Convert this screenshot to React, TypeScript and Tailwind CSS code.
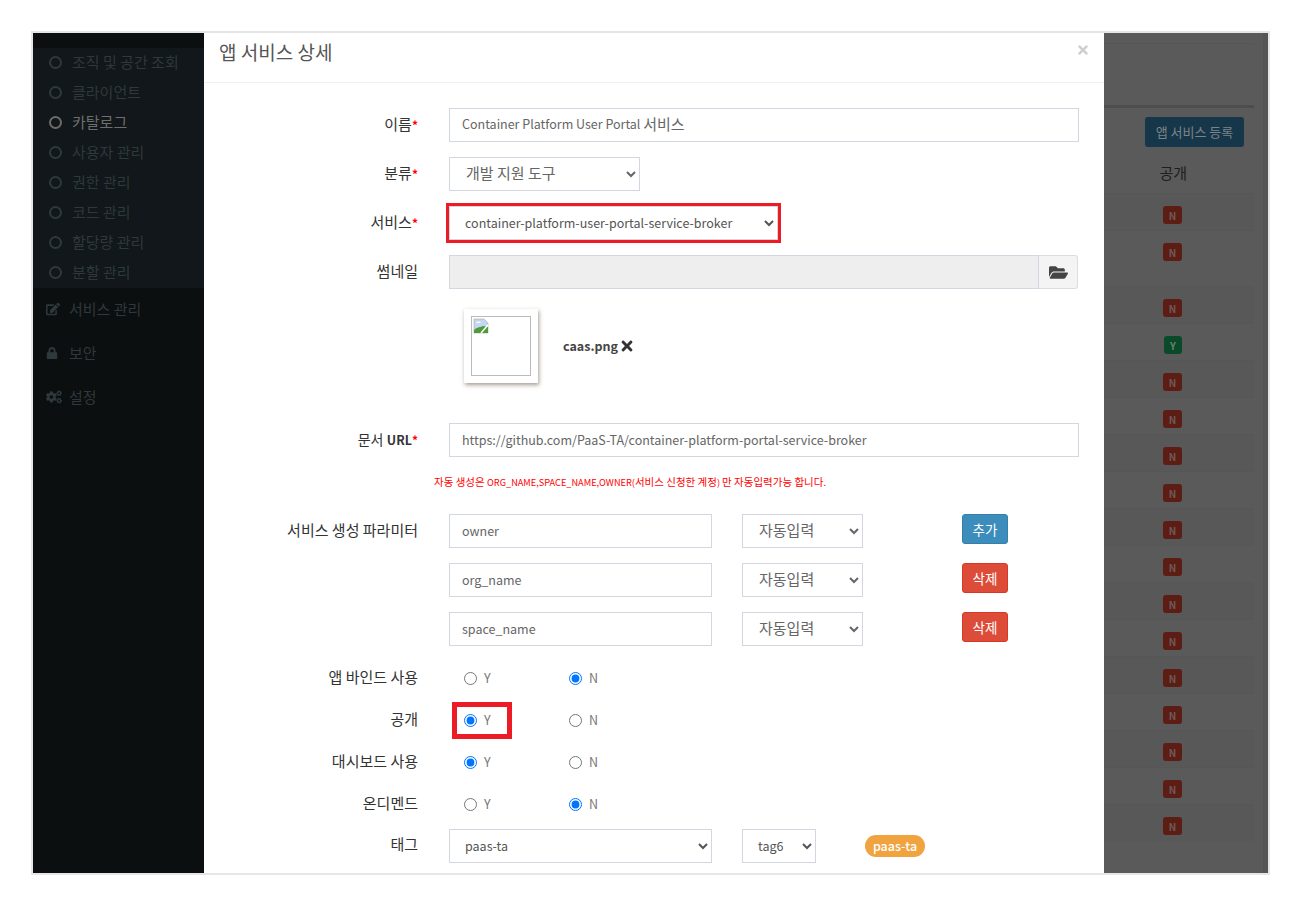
import React from "react";
import { FaFolderOpen, FaTimes, FaEdit, FaLock, FaCogs } from "react-icons/fa";

const font = "font-['Noto_Sans_CJK_KR','Noto_Sans',sans-serif]";
const inputCls =
  "h-[34px] border border-[#d2d6de] bg-white px-3 pb-[2px] text-[12.5px] text-[#666] outline-none";
const selectLatin =
  "h-[34px] border border-[#d2d6de] bg-white pb-[1px] pl-[11px] pr-1 text-[12.5px] text-[#555] outline-none";
const selectKo =
  "h-[34px] border border-[#d2d6de] bg-white pb-[3px] pl-[12px] pr-1 text-[15px] text-[#666] outline-none";

const subMenu = ["조직 및 공간 조회", "클라이언트", "카탈로그", "사용자 관리", "권한 관리", "코드 관리", "할당량 관리", "분할 관리"];
const badges = ["N", "N", "N", "Y", "N", "N", "N", "N", "N", "N", "N", "N", "N", "N", "N", "N", "N"];

function Label({ children, req }: { children: React.ReactNode; req?: boolean }) {
  return (
    <label className="block w-[214px] shrink-0 text-right text-[15px] leading-[20px] text-[#333]">
      {children}
      {req && <span className="text-[12px] font-bold text-[#f00]">*</span>}
    </label>
  );
}

function Row({ label, req, children, mb = "mb-[15px]" }: { label: React.ReactNode; req?: boolean; children: React.ReactNode; mb?: string }) {
  return (
    <div className={`flex items-start ${mb}`}>
      <div className="shrink-0 pt-[6px]"><Label req={req}>{label}</Label></div>
      <div className="ml-[31px] flex-1">{children}</div>
    </div>
  );
}

function Radio({ checked, name, label }: { checked?: boolean; name: string; label: string }) {
  return (
    <label className="flex items-center gap-[7px] text-[12.5px] leading-none text-[#777]">
      <input type="radio" name={name} defaultChecked={checked} className="m-0 h-[13px] w-[13px]" />
      {label}
    </label>
  );
}

function RadioRow({ label, name, yes, boxed }: { label: string; name: string; yes: boolean; boxed?: boolean }) {
  return (
    <div className="flex h-[42px] items-center">
      <div className="-mt-[3px] shrink-0"><Label>{label}</Label></div>
      <div className="ml-[46px] w-[105px] shrink-0">
        {boxed ? (
          <div className="relative">
            <Radio name={name} label="Y" checked={yes} />
            <div className="absolute -left-[12px] -top-[12px] h-[37px] w-[60px] border-[5px] border-[#ed1c24]" />
          </div>
        ) : (
          <Radio name={name} label="Y" checked={yes} />
        )}
      </div>
      <Radio name={name} label="N" checked={!yes} />
    </div>
  );
}

function ParamRow({ value, add }: { value: string; add?: boolean }) {
  return (
    <div className="flex items-start">
      <input readOnly value={value} className={`${inputCls} w-[263px]`} />
      <select className={`${selectKo} ml-[30px] w-[121px]`}><option>자동입력</option></select>
      <button className={`ml-[99px] h-[30px] w-[46px] rounded-[3px] border text-[13.5px] text-white ${add ? "border-[#367fa9] bg-[#3c8dbc]" : "border-[#d73925] bg-[#dd4b39]"}`}>
        {add ? "추가" : "삭제"}
      </button>
    </div>
  );
}

export default function App() {
  return (
    <div className={`h-[906px] overflow-hidden bg-white pt-[31px] pl-[31px] ${font}`}>
      <div className="relative flex h-[844px] w-[1239px] overflow-hidden border-2 border-[#e6e6e6] bg-[#5a5a5a]">
        {/* Sidebar */}
        <aside className="w-[171px] shrink-0 bg-[#0b0f10]">
          <div className="mt-[15px] bg-[#11171a]">
            {subMenu.map((m, i) => (
              <div key={m} className={`flex h-[30px] items-center pb-[1px] pl-[16px] text-[15px] ${i === 2 ? "text-[#6e6e6c]" : "text-[#2f383b]"}`}>
                <span className={`mr-[10px] h-[13px] w-[13px] rounded-full border-2 ${i === 2 ? "border-[#6f6c68]" : "border-[#2f393c]"}`} />
                {m}
              </div>
            ))}
          </div>
          {[
            { t: "서비스 관리", I: FaEdit, s: 14 },
            { t: "보안", I: FaLock, s: 12 },
            { t: "설정", I: FaCogs, s: 16 },
          ].map(({ t, I, s }) => (
            <div key={t} className="flex h-[44px] items-center pb-[2px] pl-[13px] text-[15px] text-[#2f383b]">
              <span className="flex w-[23px]"><I size={s} /></span>
              {t}
            </div>
          ))}
        </aside>

        {/* Background content */}
        <main className="flex flex-1 flex-col pr-[9px]">
          <div className="mt-[10px] border-t border-[#565656]" />
          <div className="mt-[61px] h-[3px] bg-[#4d4d4d]" />
          <div className="mt-[9px] flex justify-end pr-[10px]">
            <button className="h-[30px] w-[99px] rounded-[3px] bg-[#16364a] pb-[1px] text-[13px] text-[#7d8488]">앱 서비스 등록</button>
          </div>
          <div className="mt-[15px]">
            <div className="h-[31px] pr-[67px] text-right text-[15px] leading-[22px] text-[#1e1e1e]">공개</div>
            {badges.map((b, i) => (
              <div
                key={i}
                className="flex items-start justify-end border-t border-[#565656] pr-[72px] pt-[12px]"
                style={{ height: i === 1 ? 56 : 37, backgroundColor: i % 2 === 0 ? "#585858" : "#5a5a5a" }}
              >
                <span className={`flex h-[18px] items-center justify-center rounded-[3px] text-[10px] font-bold ${b === "Y" ? "w-[18px] bg-[#0a4a2a] text-[#6f7f76]" : "w-[19px] bg-[#5c1d14] text-[#6f5a58]"}`}>
                  {b}
                </span>
              </div>
            ))}
          </div>
        </main>
        <div className="w-[5px] shrink-0 bg-[#555]" />

        {/* Modal */}
        <div className="absolute bottom-0 left-[171px] top-0 w-[900px] bg-white">
          <div className="relative flex h-[50px] items-center border-b border-[#f0f0f0] pb-[10px] pl-[15px] text-[19px] text-[#555]">
            앱 서비스 상세
            <FaTimes className="absolute right-[14px] top-[10px] text-[#cfcfcf]" size={14} />
          </div>

          <div className="pt-[25px]">
            <Row label="이름" req>
              <div className={`${inputCls} flex w-[630px] items-center`}>
                Container Platform User Portal&nbsp;<span className="text-[15px]">서비스</span>
              </div>
            </Row>
            <Row label="분류" req>
              <select className={`${selectKo} w-[191px]`}><option>개발 지원 도구</option></select>
            </Row>
            <Row label="서비스" req>
              <div className="relative">
                <select className={`${selectLatin} w-[329px]`}><option>container-platform-user-portal-service-broker</option></select>
                <div className="absolute -left-[3px] -top-[3px] h-[40px] w-[335px] border-[3px] border-[#ed1c24]" />
              </div>
            </Row>
            <Row label="썸네일" mb="mb-[20px]">
              <div className="flex h-[34px] w-[629px]">
                <div className="flex-1 border border-[#d2d6de] bg-[#eee]" />
                <div className="flex w-[39px] items-center justify-center rounded-r-[3px] border border-l-0 border-[#ddd] bg-[#f4f4f4] text-[#444]">
                  <FaFolderOpen size={19} />
                </div>
              </div>
            </Row>
            <Row label="" mb="mb-[40px]">
              <div className="ml-[15px] flex items-center">
                <div className="h-[74px] w-[74px] bg-white p-[7px] shadow-[1px_2px_4px_rgba(80,60,40,0.5)]">
                  <div className="h-[60px] w-[60px] border border-[#bbb] p-px">
                    <svg width="16" height="16" viewBox="0 0 16 16">
                      <path d="M1 1h10l4 4v10H1z" fill="#c3d7f3" stroke="#a9a9a9" strokeWidth="0.6" />
                      <path d="M1 15l0-3c3-3 7-3 9-4l5 1v6z" fill="#4f9a3a" />
                      <path d="M8 15L15 7" stroke="#fff" strokeWidth="1.5" />
                      <path d="M3 5c1-2 4-2 5 0z" fill="#fff" />
                    </svg>
                  </div>
                </div>
                <span className="ml-[25px] text-[12.5px] font-bold text-[#444]">caas.png</span>
                <FaTimes className="ml-[1px] text-[#333]" size={16} />
              </div>
            </Row>
            <Row label={<><span className="text-[14px]">문서</span> <b className="text-[12.5px] font-bold">URL</b></>} req mb="mb-[17px]">
              <input readOnly value="https://github.com/PaaS-TA/container-platform-portal-service-broker" className={`${inputCls} w-[630px]`} />
            </Row>
            <p className="mb-[24px] ml-[230px] flex h-[16px] items-center whitespace-pre text-[10.5px] leading-[16px] text-[#f00]">
              자동 생성은 <span className="text-[9.2px]">ORG_NAME,SPACE_NAME,OWNER(</span>서비스 신청한 계정<span className="text-[9.2px]">) </span>만 자동입력가능 합니다<span className="text-[9.2px]">.</span>
            </p>
            <Row label="서비스 생성 파라미터" mb="mb-0">
              <div className="flex flex-col gap-[15px]">
                <ParamRow value="owner" add />
                <ParamRow value="org_name" />
                <ParamRow value="space_name" />
              </div>
            </Row>
            <div className="pt-[11px]">
              <RadioRow label="앱 바인드 사용" name="bind" yes={false} />
              <RadioRow label="공개" name="pub" yes boxed />
              <RadioRow label="대시보드 사용" name="dash" yes />
              <RadioRow label="온디멘드" name="ond" yes={false} />
            </div>
            <div className="mt-[4px] flex items-start">
              <div className="shrink-0 pt-[5px]"><Label>태그</Label></div>
              <div className="ml-[31px] flex items-center">
                <select className={`${selectLatin} w-[263px]`}><option>paas-ta</option></select>
                <select className={`${selectLatin} ml-[30px] w-[74px]`}><option>tag6</option></select>
                <span className="ml-[49px] flex h-[22px] w-[60px] items-center justify-center rounded-full bg-[#f0a33f] text-[12.5px] font-medium text-white">paas-ta</span>
              </div>
            </div>
          </div>
        </div>
      </div>
    </div>
  );
}
